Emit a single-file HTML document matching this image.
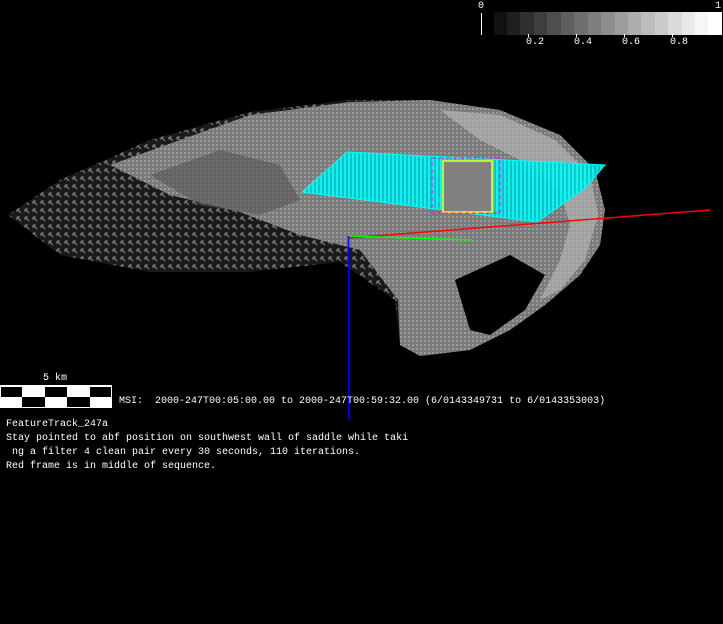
<!DOCTYPE html>
<html><head><style>
html,body{margin:0;padding:0;background:#000;width:723px;height:624px;overflow:hidden;}
.t{position:absolute;font-family:"Liberation Mono",monospace;font-size:10px;color:#fff;white-space:pre;line-height:14px;}
</style></head><body>
<svg width="723" height="624" style="position:absolute;left:0;top:0">
<defs>
<pattern id="dots" width="8" height="8" patternUnits="userSpaceOnUse">
<rect width="8" height="8" fill="#1a1a1a"/>
<path d="M1 1h3M1 1v3M1 1l4 4" stroke="#888" stroke-width="1"/>
</pattern>
<pattern id="mesh" width="4" height="4" patternUnits="userSpaceOnUse">
<rect width="4" height="4" fill="#7a7a7a"/>
<rect width="2" height="2" fill="#9a9a9a"/>
</pattern>
<pattern id="cy" width="4" height="4" patternUnits="userSpaceOnUse">
<rect width="4" height="4" fill="#0cc"/>
<rect width="2" height="4" fill="#0ff"/>
</pattern>
</defs>
<g>
<rect x="494" y="12" width="14" height="23" fill="#111"/>
<rect x="507" y="12" width="14" height="23" fill="#1f1f1f"/>
<rect x="520" y="12" width="14" height="23" fill="#2f2f2f"/>
<rect x="534" y="12" width="14" height="23" fill="#3e3e3e"/>
<rect x="547" y="12" width="14" height="23" fill="#4e4e4e"/>
<rect x="561" y="12" width="14" height="23" fill="#5e5e5e"/>
<rect x="574" y="12" width="14" height="23" fill="#6e6e6e"/>
<rect x="588" y="12" width="14" height="23" fill="#7e7e7e"/>
<rect x="601" y="12" width="14" height="23" fill="#8d8d8d"/>
<rect x="615" y="12" width="14" height="23" fill="#9d9d9d"/>
<rect x="628" y="12" width="14" height="23" fill="#adadad"/>
<rect x="641" y="12" width="14" height="23" fill="#bcbcbc"/>
<rect x="655" y="12" width="14" height="23" fill="#cbcbcb"/>
<rect x="668" y="12" width="14" height="23" fill="#dadada"/>
<rect x="682" y="12" width="14" height="23" fill="#e9e9e9"/>
<rect x="695" y="12" width="14" height="23" fill="#f6f6f6"/>
<rect x="708" y="12" width="14" height="23" fill="#fff"/>
<line x1="481.5" y1="13" x2="481.5" y2="35" stroke="#fff"/>
<line x1="721.5" y1="13" x2="721.5" y2="35" stroke="#fff"/>
<line x1="528.5" y1="34" x2="528.5" y2="37" stroke="#fff"/>
<line x1="576.5" y1="34" x2="576.5" y2="37" stroke="#fff"/>
<line x1="624.5" y1="34" x2="624.5" y2="37" stroke="#fff"/>
<line x1="672.5" y1="34" x2="672.5" y2="37" stroke="#fff"/>
</g>
<path d="M8 215 L60 180 L150 140 L250 112 L350 100 L430 100 L500 110 L560 135 L595 170 L605 210 L600 245 L580 275 L545 305 L510 330 L470 350 L420 356 L400 345 L395 300 L340 262 L250 272 L150 272 L60 255 Z" fill="url(#dots)"/>
<path d="M110 165 L250 115 L350 102 L430 100 L500 110 L560 135 L595 170 L605 210 L600 245 L580 275 L545 305 L510 330 L470 350 L420 356 L400 345 L398 300 L360 250 L300 235 L240 212 L170 195 Z" fill="url(#mesh)"/>
<path d="M440 110 L500 115 L555 140 L590 175 L598 215 L585 260 L560 290 L540 300 L560 260 L570 225 L560 190 L520 160 L480 140Z" fill="#b4b4b4" opacity="0.7"/>
<path d="M455 280 L510 255 L545 275 L525 310 L490 335 L470 330Z" fill="#000"/>
<path d="M150 175 L220 150 L280 165 L300 200 L260 215 L200 205Z" fill="#555" opacity="0.6"/>
<polygon points="302,192 347,152 605,165 585,188 537,222" fill="url(#cy)" opacity="0.9"/>
<polygon points="302,192 347,152 605,165 585,188 537,222" fill="none" stroke="#0ff"/>
<rect x="443" y="161" width="49" height="51" fill="#808080" stroke="#ff0" stroke-width="1.5"/>
<rect x="432" y="158" width="68" height="55" fill="none" stroke="#f0f" stroke-dasharray="4,3"/>
<line x1="348" y1="238" x2="710" y2="210" stroke="#f00" stroke-width="1.5"/>
<line x1="348" y1="236" x2="472" y2="240" stroke="#0f0" stroke-width="1.5"/>
<line x1="348.5" y1="236" x2="348.5" y2="420" stroke="#00f" stroke-width="1.5"/>
<rect x="0" y="385" width="112" height="23" fill="#fff"/>
<rect x="1" y="387" width="21" height="10" fill="#000"/>
<rect x="45" y="387" width="22" height="10" fill="#000"/>
<rect x="90" y="387" width="21" height="10" fill="#000"/>
<rect x="22" y="397" width="23" height="10" fill="#000"/>
<rect x="67" y="397" width="23" height="10" fill="#000"/>
</svg>
<div class="t" style="left:478px;top:0px">0</div>
<div class="t" style="left:715px;top:0px">1</div>
<div class="t" style="left:526px;top:36px">0.2</div>
<div class="t" style="left:574px;top:36px">0.4</div>
<div class="t" style="left:622px;top:36px">0.6</div>
<div class="t" style="left:670px;top:36px">0.8</div>
<div class="t" style="left:43px;top:372px">5 km</div>
<div class="t" style="left:119px;top:395px">MSI:  2000-247T00:05:00.00 to 2000-247T00:59:32.00 (6/0143349731 to 6/0143353003)</div>
<div class="t" style="left:6px;top:418px">FeatureTrack_247a
Stay pointed to abf position on southwest wall of saddle while taki
 ng a filter 4 clean pair every 30 seconds, 110 iterations.
Red frame is in middle of sequence.</div>
</body></html>
